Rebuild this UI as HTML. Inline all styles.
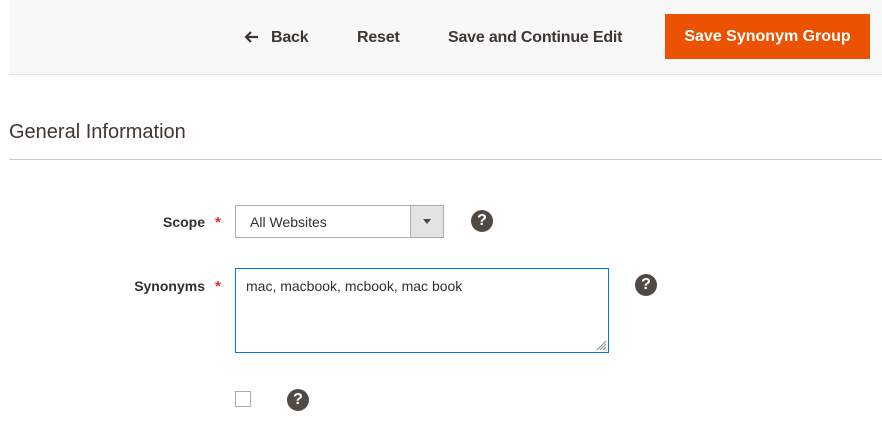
<!DOCTYPE html>
<html><head><style>
body{margin:0;width:882px;height:443px;background:#fff;font-family:"Liberation Sans",sans-serif;color:#303030;position:relative;overflow:hidden}
.a{position:absolute}
.hdr{left:9px;top:0;width:873px;height:74px;background:#f8f8f8;border-bottom:1px solid #e3e3e3}
.btn{font-size:16px;font-weight:bold;color:#41362f;top:29px;letter-spacing:-0.2px}
.q{width:22px;height:22px;border-radius:50%;background:#514943;color:#fff;font-weight:bold;font-size:16px;text-align:center;line-height:22px}
.lbl{font-size:14px;font-weight:bold;color:#303030;text-align:right;width:120px}
.star{color:#e22626;font-size:15px;font-weight:bold}
</style></head><body>
<div class="a hdr"></div>
<svg class="a" style="left:243px;top:30px" width="16" height="14"><path d="M15 7H3M8 2L3 7L8 12" stroke="#41362f" stroke-width="2.2" fill="none"/></svg>
<div class="a btn" style="left:271px">Back</div>
<div class="a btn" style="left:357px">Reset</div>
<div class="a btn" style="left:448px">Save and Continue Edit</div>
<div class="a" style="left:665px;top:14px;width:205px;height:45px;background:#eb5202;color:#fff;font-weight:bold;font-size:16px;line-height:46px;text-align:center">Save Synonym Group</div>
<div class="a" style="left:9px;top:121px;font-size:20px;color:#41362f">General Information</div>
<div class="a" style="left:9px;top:159px;width:873px;height:1px;background:#cccccc"></div>

<div class="a lbl" style="left:85px;top:214px">Scope</div>
<div class="a star" style="left:215px;top:214px">*</div>
<div class="a" style="left:235px;top:205px;width:209px;height:33px;border:1px solid #adadad;box-sizing:border-box;background:#fff">
 <div class="a" style="left:14px;top:8px;font-size:14px">All Websites</div>
 <div class="a" style="right:0;top:0;width:32px;height:31px;background:#e3e3e3;border-left:1px solid #adadad"></div>
 <div class="a" style="right:12px;top:13px;width:0;height:0;border-left:4px solid transparent;border-right:4px solid transparent;border-top:5px solid #514943"></div>
</div>
<div class="a q" style="left:471px;top:210px">?</div>

<div class="a lbl" style="left:85px;top:278px">Synonyms</div>
<div class="a star" style="left:215px;top:278px">*</div>
<div class="a" style="left:235px;top:268px;width:374px;height:85px;border:1px solid #007bdb;box-sizing:border-box">
 <div class="a" style="left:10px;top:9px;font-size:14px">mac, macbook, mcbook, mac book</div>
 <svg class="a" style="right:1px;bottom:1px" width="12" height="12"><path d="M2 11L11 2M5 11L11 5M8 11L11 8" stroke="#888" stroke-width="1"/></svg>
</div>
<div class="a q" style="left:635px;top:274px">?</div>

<div class="a" style="left:235px;top:391px;width:16px;height:16px;border:1px solid #adadad;box-sizing:border-box"></div>
<div class="a q" style="left:287px;top:389px">?</div>
</body></html>
